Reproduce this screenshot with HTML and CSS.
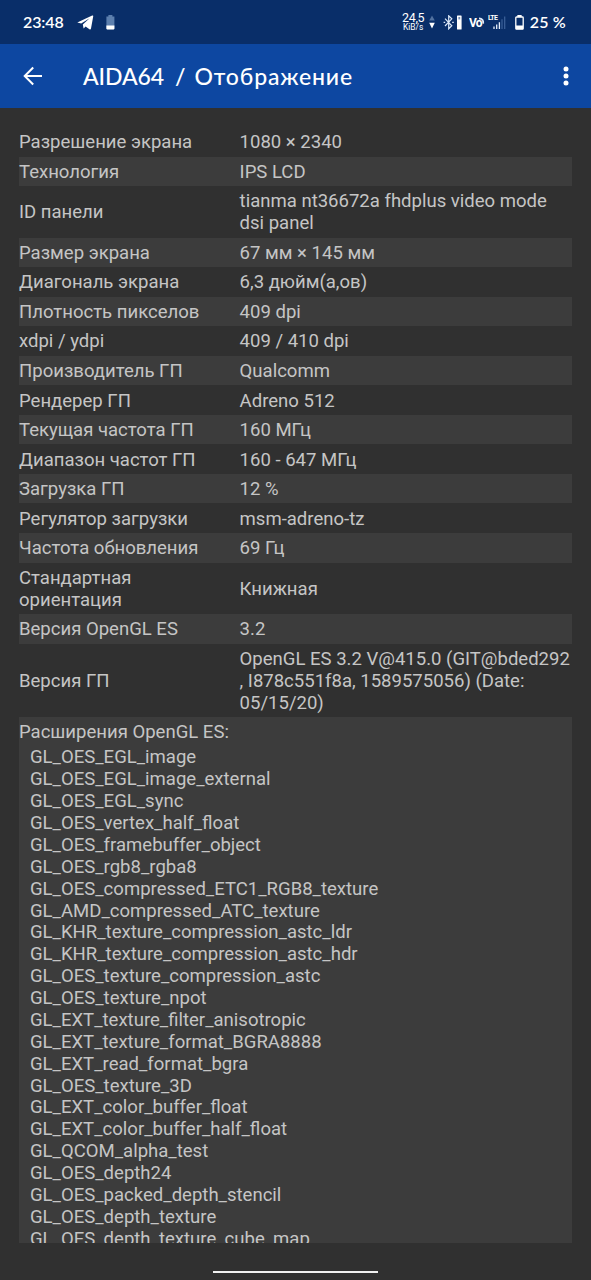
FILE: index.html
```html
<!DOCTYPE html>
<html lang="ru">
    <head>
        <meta charset="utf-8">
        <title>AIDA64 / Отображение</title>
        <link rel="stylesheet" href="styles.css">
    </head>
    <body>
        <div class="status-bar">
            <span class="clock">23:48</span>
            <svg class="telegram" width="17" height="15" viewBox="0 0 17 15">
                <path d="M0.3 7.6 L15.2 0.6 Q16.5 0.2 16.2 1.6 L14 13.6 Q13.6 15 12.4 14.2 L8.6 11.4 L6.6 13.4 L5.8 9.4 L12.6 3.2 L4.2 8.6 Z" fill="#fff"/>
            </svg>
            <svg class="battery-note" width="9" height="15" viewBox="0 0 9 15">
                <path d="M2.4 0h4v1.4H8.4V14.2H.4V1.4h2z" fill="#5c7fae"/>
                <path d="M.4 10.6h8v3q0 .8-.8.8H1.2q-.8 0-.8-.8z" fill="#fff"/>
            </svg>
            <div class="status-right">
                <div class="speed"><span class="speed-num">24,5</span><span class="speed-unit">KiB/s</span></div>
                <svg class="arrows" width="6" height="14" viewBox="0 0 6 14">
                    <path d="M3 .5 5.8 5.4H.2z" fill="#51719f"/>
                    <path d="M3 13.5.2 7.8H5.8z" fill="#fff"/>
                </svg>
                <svg class="bluetooth" width="20" height="15" viewBox="0 0 20 15">
                    <path d="M2 3.6 8.8 10.8 5.7 13.8V.8L8.8 3.8 2 11" fill="none" stroke="#dce8f8" stroke-width="1.2"/>
                    <path d="M.6 7.4h1.6M9.2 7.4h1.6" stroke="#dce8f8" stroke-width="1.4"/>
                    <rect x="14" y=".5" width="4.6" height="14" rx=".6" fill="#fff"/>
                    <rect x="15.4" y="2" width="1.8" height="2.4" fill="#7890b5"/>
                </svg>
                <svg class="volte" width="16" height="13" viewBox="0 0 16 13">
                    <text x="0" y="11.3" class="vo" textLength="13.5">Vo</text>
                    <path d="M10 2.4q4.8.4 4.2 5.2" fill="none" stroke="#dce8f8" stroke-width="1.8"/>
                </svg>
                <svg class="signal" width="18" height="16" viewBox="0 0 18 16">
                    <text x="0" y="6.4" class="lte" textLength="10">LTE</text>
                    <path d="M6 15v-2.6M8.7 15v-4.5M11.4 15V8.3" stroke="#e6eefa" stroke-width="1.3"/>
                    <path d="M14 15V5.2M16.7 15V2.5" stroke="#3d629a" stroke-width="1.2"/>
                </svg>
                <svg class="battery" width="9" height="15" viewBox="0 0 9 15">
                    <path d="M3 1.3V.6h3v.7M1.5 2h6q.7 0 .7.7v10.8q0 .7-.7.7h-6q-.7 0-.7-.7V2.7q0-.7.7-.7z" fill="none" stroke="#fff" stroke-width="1.3"/>
                    <rect x="1" y="10.5" width="7" height="3.7" fill="#fff"/>
                </svg>
                <span class="percent">25 %</span>
            </div>
        </div>
        <div class="toolbar">
            <svg class="back" width="20" height="20" viewBox="0 0 20 20">
                <path d="M19 10H1.7M10.2 1.5 1.7 10l8.5 8.5" fill="none" stroke="#fff" stroke-width="2"/>
            </svg>
            <h1><span class="app">AIDA64</span><span class="slash">/</span><span class="page">Отображение</span></h1>
            <svg class="more" width="6" height="20" viewBox="0 0 6 20">
                <circle cx="3" cy="3" r="2.5" fill="#fff"/>
                <circle cx="3" cy="10" r="2.5" fill="#fff"/>
                <circle cx="3" cy="17" r="2.5" fill="#fff"/>
            </svg>
        </div>
        <div class="content">
            <div class="row"><div class="name">Разрешение экрана</div><div class="value">1080 × 2340</div></div>
            <div class="row"><div class="name">Технология</div><div class="value">IPS LCD</div></div>
            <div class="row"><div class="name">ID панели</div><div class="value">tianma nt36672a fhdplus video mode<br>dsi panel</div></div>
            <div class="row"><div class="name">Размер экрана</div><div class="value">67 мм × 145 мм</div></div>
            <div class="row"><div class="name">Диагональ экрана</div><div class="value">6,3 дюйм(а,ов)</div></div>
            <div class="row"><div class="name">Плотность пикселов</div><div class="value">409 dpi</div></div>
            <div class="row"><div class="name">xdpi / ydpi</div><div class="value">409 / 410 dpi</div></div>
            <div class="row"><div class="name">Производитель ГП</div><div class="value">Qualcomm</div></div>
            <div class="row"><div class="name">Рендерер ГП</div><div class="value">Adreno 512</div></div>
            <div class="row"><div class="name">Текущая частота ГП</div><div class="value">160 МГц</div></div>
            <div class="row"><div class="name">Диапазон частот ГП</div><div class="value">160 - 647 МГц</div></div>
            <div class="row"><div class="name">Загрузка ГП</div><div class="value">12 %</div></div>
            <div class="row"><div class="name">Регулятор загрузки</div><div class="value">msm-adreno-tz</div></div>
            <div class="row"><div class="name">Частота обновления</div><div class="value">69 Гц</div></div>
            <div class="row"><div class="name">Стандартная<br>ориентация</div><div class="value">Книжная</div></div>
            <div class="row"><div class="name">Версия OpenGL ES</div><div class="value">3.2</div></div>
            <div class="row"><div class="name">Версия ГП</div><div class="value">OpenGL ES 3.2 V@415.0 (GIT@bded292<br>, I878c551f8a, 1589575056) (Date:<br>05/15/20)</div></div>
            <div class="extensions">
                <div class="ext-title">Расширения OpenGL ES:</div>
                <ul>
                    <li>GL_OES_EGL_image</li>
                    <li>GL_OES_EGL_image_external</li>
                    <li>GL_OES_EGL_sync</li>
                    <li>GL_OES_vertex_half_float</li>
                    <li>GL_OES_framebuffer_object</li>
                    <li>GL_OES_rgb8_rgba8</li>
                    <li>GL_OES_compressed_ETC1_RGB8_texture</li>
                    <li>GL_AMD_compressed_ATC_texture</li>
                    <li>GL_KHR_texture_compression_astc_ldr</li>
                    <li>GL_KHR_texture_compression_astc_hdr</li>
                    <li>GL_OES_texture_compression_astc</li>
                    <li>GL_OES_texture_npot</li>
                    <li>GL_EXT_texture_filter_anisotropic</li>
                    <li>GL_EXT_texture_format_BGRA8888</li>
                    <li>GL_EXT_read_format_bgra</li>
                    <li>GL_OES_texture_3D</li>
                    <li>GL_EXT_color_buffer_float</li>
                    <li>GL_EXT_color_buffer_half_float</li>
                    <li>GL_QCOM_alpha_test</li>
                    <li>GL_OES_depth24</li>
                    <li>GL_OES_packed_depth_stencil</li>
                    <li>GL_OES_depth_texture</li>
                    <li>GL_OES_depth_texture_cube_map</li>
                </ul>
            </div>
        </div>
        <div class="nav-bar"><div class="handle"></div></div>
    </body>
</html>
```

FILE: styles.css
```css
* { box-sizing: border-box; }

body {
    margin: 0;
    height: 1280px;
    display: flex;
    flex-direction: column;
    overflow: hidden;
    background: #303030;
    color: #c5c5c5;
    font-family: Roboto, sans-serif;
    font-size: 18.54px;
    line-height: 21.9px;
}

.status-bar {
    height: 44px;
    flex: none;
    display: flex;
    align-items: center;
    padding: 0 25px 0 23px;
    background: #092e69;
    color: #fff;
}

.clock, .percent {
    font-family: Lato, sans-serif;
    font-size: 16px;
    font-weight: 600;
}
.clock { letter-spacing: -0.1px; }
.telegram { margin-left: 13px; }
.battery-note { margin-left: 12px; }

.status-right {
    margin-left: auto;
    display: flex;
    align-items: center;
}
.speed {
    display: flex;
    flex-direction: column;
    align-items: center;
    width: 23px;
}
.speed-num {
    font-size: 12.5px;
    line-height: 10px;
    letter-spacing: -0.3px;
}
.speed-unit { font-size: 8.4px; line-height: 8px; }
.arrows { margin-left: 4px; }
.bluetooth { margin-left: 8px; }
.volte { margin-left: 6px; }
.vo { font: bold 12px Roboto, sans-serif; fill: #fff; }
.signal { margin-left: 3px; }
.lte { font: bold 7px Roboto, sans-serif; fill: #fff; }
.battery { margin-left: 9px; }
.percent { margin-left: 6px; letter-spacing: 0.2px; }

.toolbar {
    height: 64px;
    flex: none;
    display: flex;
    align-items: center;
    padding: 0 22px 0 23px;
    background: #0d47a1;
    color: #fff;
}
h1 {
    display: flex;
    margin: 0 0 0 40px;
    font-family: Lato, sans-serif;
    font-size: 23px;
    font-weight: 500;
    line-height: 30px;
    white-space: nowrap;
}
.app { letter-spacing: -0.1px; }
.slash { margin: 0 9px 0 11px; }
.page { letter-spacing: 0.85px; }
.more { margin-left: auto; }

.content {
    height: 1135px;
    flex: none;
    padding: 19px 19px 0;
    overflow: hidden;
}
.row {
    display: flex;
    align-items: center;
    padding: 5.25px 0 2.4px;
    white-space: nowrap;
}
.row:nth-child(even) { background: #3c3c3c; }
.name { width: 220.6px; flex: none; }

.extensions {
    padding-top: 5.25px;
    background: #3c3c3c;
}
.extensions ul {
    margin: 3.3px 0 0;
    padding: 0 0 0 11px;
    line-height: 21.88px;
    list-style: none;
}

.nav-bar {
    flex: 1;
    display: flex;
    justify-content: center;
    padding-top: 28px;
}
.handle {
    width: 165px;
    height: 2px;
    background: #f0f0f0;
}
```
